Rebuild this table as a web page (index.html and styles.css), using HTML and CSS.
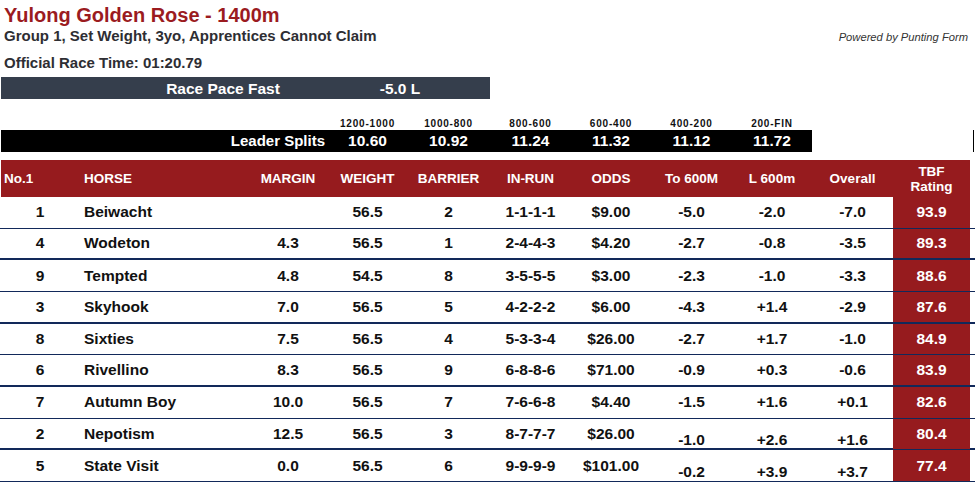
FILE: index.html
```html
<!DOCTYPE html>
<html>
<head>
<meta charset="utf-8">
<link rel="stylesheet" href="styles.css">
</head>
<body>
<div class="page">
  <div class="top">
    <div class="title">Yulong Golden Rose - 1400m</div>
    <div class="subrow">
      <div class="subtitle">Group 1, Set Weight, 3yo, Apprentices Cannot Claim</div>
      <div class="powered">Powered by Punting Form</div>
    </div>
    <div class="racetime">Official Race Time: 01:20.79</div>
  </div>

  <div class="pacebar">
    <span class="pace-label">Race Pace Fast</span>
    <span class="pace-value">-5.0 L</span>
  </div>

  <div class="split-labels">
    <span class="c4">1200-1000</span>
    <span>1000-800</span>
    <span>800-600</span>
    <span>600-400</span>
    <span>400-200</span>
    <span>200-FIN</span>
  </div>
  <div class="splits-wrap">
    <div class="splits">
      <span class="leader">Leader Splits</span>
      <span>10.60</span>
      <span>10.92</span>
      <span>11.24</span>
      <span>11.32</span>
      <span>11.12</span>
      <span>11.72</span>
    </div>
    <div class="splits-tail"></div>
  </div>

  <div class="thead">
    <div class="h left first">No.1</div>
    <div class="h left">HORSE</div>
    <div class="h">MARGIN</div>
    <div class="h">WEIGHT</div>
    <div class="h">BARRIER</div>
    <div class="h">IN-RUN</div>
    <div class="h">ODDS</div>
    <div class="h">To 600M</div>
    <div class="h">L 600m</div>
    <div class="h">Overall</div>
    <div class="h tbf-h">TBF<br>Rating</div>
  </div>

  <div class="tbody">
    <div class="row"><div class="c">1</div><div class="c name">Beiwacht</div><div class="c"></div><div class="c">56.5</div><div class="c">2</div><div class="c">1-1-1-1</div><div class="c">$9.00</div><div class="c">-5.0</div><div class="c">-2.0</div><div class="c">-7.0</div><div class="c tbf">93.9</div><div></div></div>
    <div class="row"><div class="c">4</div><div class="c name">Wodeton</div><div class="c">4.3</div><div class="c">56.5</div><div class="c">1</div><div class="c">2-4-4-3</div><div class="c">$4.20</div><div class="c">-2.7</div><div class="c">-0.8</div><div class="c">-3.5</div><div class="c tbf">89.3</div><div></div></div>
    <div class="row"><div class="c">9</div><div class="c name">Tempted</div><div class="c">4.8</div><div class="c">54.5</div><div class="c">8</div><div class="c">3-5-5-5</div><div class="c">$3.00</div><div class="c">-2.3</div><div class="c">-1.0</div><div class="c">-3.3</div><div class="c tbf">88.6</div><div></div></div>
    <div class="row"><div class="c">3</div><div class="c name">Skyhook</div><div class="c">7.0</div><div class="c">56.5</div><div class="c">5</div><div class="c">4-2-2-2</div><div class="c">$6.00</div><div class="c">-4.3</div><div class="c">+1.4</div><div class="c">-2.9</div><div class="c tbf">87.6</div><div></div></div>
    <div class="row"><div class="c">8</div><div class="c name">Sixties</div><div class="c">7.5</div><div class="c">56.5</div><div class="c">4</div><div class="c">5-3-3-4</div><div class="c">$26.00</div><div class="c">-2.7</div><div class="c">+1.7</div><div class="c">-1.0</div><div class="c tbf">84.9</div><div></div></div>
    <div class="row"><div class="c">6</div><div class="c name">Rivellino</div><div class="c">8.3</div><div class="c">56.5</div><div class="c">9</div><div class="c">6-8-8-6</div><div class="c">$71.00</div><div class="c">-0.9</div><div class="c">+0.3</div><div class="c">-0.6</div><div class="c tbf">83.9</div><div></div></div>
    <div class="row"><div class="c">7</div><div class="c name">Autumn Boy</div><div class="c">10.0</div><div class="c">56.5</div><div class="c">7</div><div class="c">7-6-6-8</div><div class="c">$4.40</div><div class="c">-1.5</div><div class="c">+1.6</div><div class="c">+0.1</div><div class="c tbf">82.6</div><div></div></div>
    <div class="row"><div class="c">2</div><div class="c name">Nepotism</div><div class="c">12.5</div><div class="c">56.5</div><div class="c">3</div><div class="c">8-7-7-7</div><div class="c">$26.00</div><div class="c low">-1.0</div><div class="c low">+2.6</div><div class="c low">+1.6</div><div class="c tbf">80.4</div><div></div></div>
    <div class="row"><div class="c">5</div><div class="c name">State Visit</div><div class="c">0.0</div><div class="c">56.5</div><div class="c">6</div><div class="c">9-9-9-9</div><div class="c">$101.00</div><div class="c low">-0.2</div><div class="c low">+3.9</div><div class="c low">+3.7</div><div class="c tbf">77.4</div><div></div></div>
  </div>
</div>
</body>
</html>
```

FILE: styles.css
```css
html, body {
  margin: 0;
  padding: 0;
  background: #ffffff;
}
body {
  font-family: "Liberation Sans", Arial, sans-serif;
  font-weight: bold;
  color: #111111;
}
.page {
  width: 975px;
}
.top {
  padding: 3px 7px 0 4px;
}
.title {
  font-size: 20px;
  line-height: 24px;
  color: #9b1b1f;
}
.subrow {
  display: flex;
  justify-content: space-between;
  align-items: baseline;
}
.subtitle {
  font-size: 15px;
  line-height: 18px;
  color: #2e2e33;
}
.powered {
  font-size: 11.2px;
  font-weight: normal;
  font-style: italic;
  color: #333333;
}
.racetime {
  margin-top: 9px;
  font-size: 15px;
  line-height: 18px;
  color: #2e2e33;
}
.pacebar {
  margin-top: 5px;
  margin-left: 1px;
  width: 489px;
  height: 22px;
  box-sizing: border-box;
  padding: 2px 0 0 118px;
  background: #353e4c;
  color: #ffffff;
  font-size: 15.5px;
  line-height: 20px;
  display: flex;
}
.pace-label {
  width: 208px;
  text-align: center;
}
.pace-value {
  width: 146px;
  text-align: center;
}

.split-labels,
.splits {
  display: grid;
  grid-template-columns: 79px 168px 80px 79px 83px 81px 80px 81px 80px;
  margin-left: 1px;
  width: 811px;
}
.split-labels {
  margin-top: 19px;
  height: 12px;
  font-size: 10px;
  line-height: 12px;
  letter-spacing: 0.8px;
  color: #111111;
}
.split-labels span {
  text-align: center;
}
.split-labels .c4 {
  grid-column: 4;
}
.splits-wrap {
  display: flex;
  width: 974px;
  height: 22px;
}
.splits {
  background: #000000;
  color: #ffffff;
  font-size: 15.5px;
  line-height: 22px;
  height: 22px;
}
.splits span {
  text-align: center;
}
.splits .leader {
  grid-column: 1 / span 3;
  text-align: right;
  padding-right: 3px;
  font-size: 15px;
}
.splits-tail {
  flex: 1;
  border-right: 1px solid #000000;
}

.thead {
  margin-top: 8px;
  margin-left: 1px;
  width: 969px;
  height: 37px;
  display: grid;
  grid-template-columns: 79px 168px 80px 79px 83px 81px 80px 81px 80px 81px 77px;
  background: #961b1e;
  color: #ffffff;
  font-size: 13.5px;
}
.h {
  display: flex;
  align-items: center;
  justify-content: center;
  text-align: center;
}
.h.left {
  justify-content: flex-start;
  padding-left: 4px;
}
.h.first {
  padding-left: 3px;
}
.tbf-h {
  line-height: 15px;
  padding-top: 1px;
}

.tbody {
  display: grid;
  grid-auto-rows: 31.667px;
}
.row {
  display: grid;
  grid-template-columns: 80px 168px 80px 79px 83px 81px 80px 81px 80px 81px 77px 5px;
  box-sizing: border-box;
  border-bottom: 1px solid #12295a;
  font-size: 15.5px;
}
.row:nth-child(even) {
  border-bottom-width: 2px;
}
.c {
  display: flex;
  align-items: center;
  justify-content: center;
}
.c.name {
  justify-content: flex-start;
  padding-left: 4px;
}
.c.low {
  padding-top: 12px;
}
.c.tbf {
  background: #961b1e;
  color: #ffffff;
}
```
